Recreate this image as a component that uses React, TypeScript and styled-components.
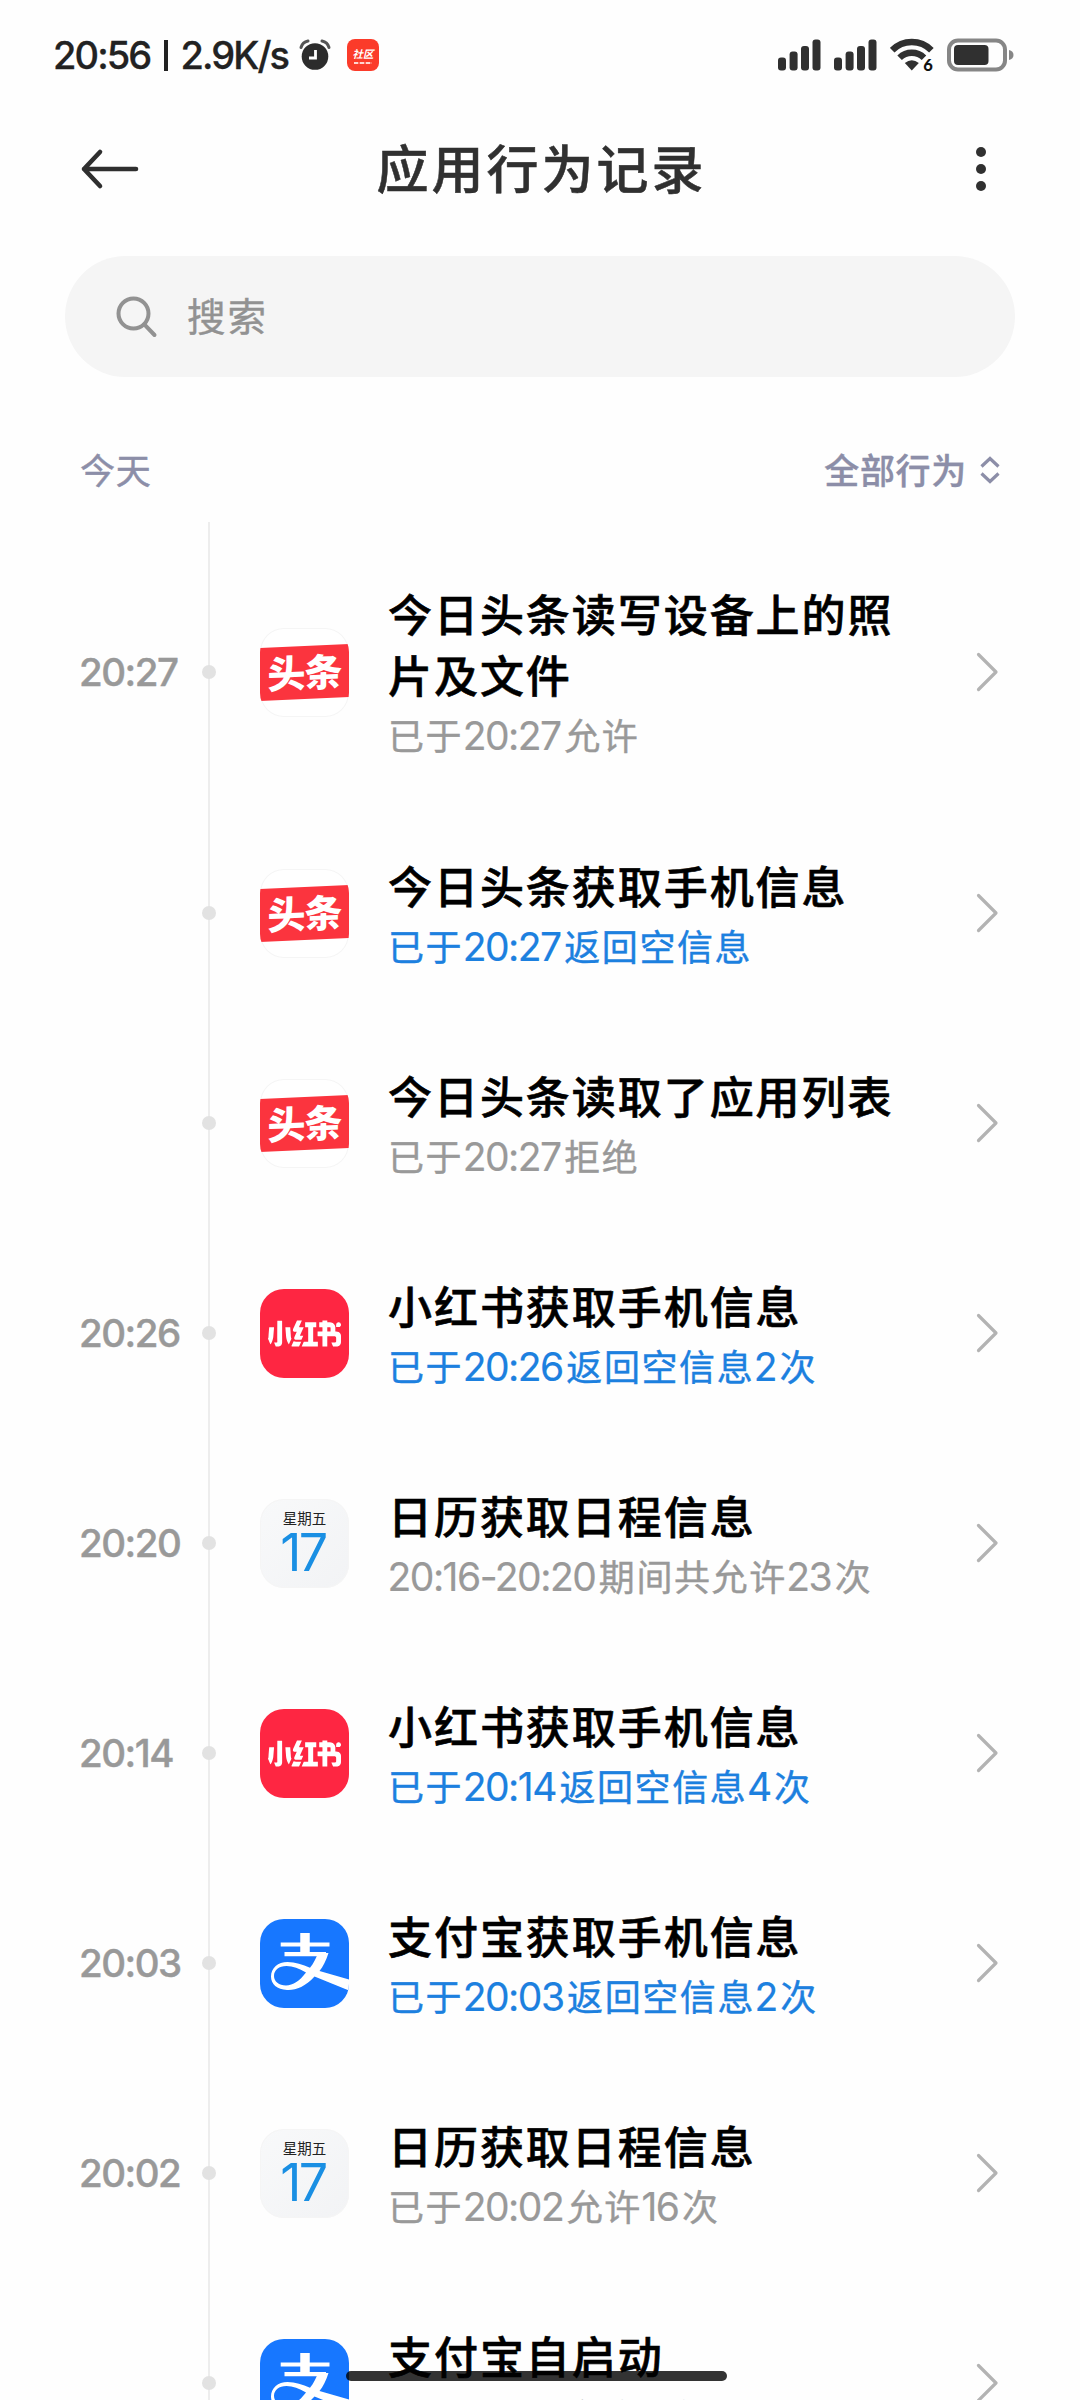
import React from "react";
import styled, { createGlobalStyle } from "styled-components";
import { SiXiaohongshu } from "react-icons/si";

const CJK = `"Noto Sans CJK SC", sans-serif`;
const LATIN = `Inter, "Noto Sans CJK SC", sans-serif`;

const GlobalStyle = createGlobalStyle`
  *, *::before, *::after { box-sizing: border-box; }
  html, body { margin: 0; padding: 0; background: #fefefe; overflow: hidden; }
`;

const Screen = styled.div`
  position: relative;
  display: flex;
  flex-direction: column;
  width: 1080px;
  height: 2400px;
  overflow: hidden;
  background: #fefefe;
  font-family: ${CJK};
  font-feature-settings: "calt", "cv03", "cv04";
  white-space: nowrap;
`;

/* ---------- status bar ---------- */

const StatusBar = styled.header`
  display: flex;
  align-items: center;
  justify-content: space-between;
  flex: none;
  height: 110px;
  padding: 0 66px 0 53px;
`;

const StatusGroup = styled.div<{ $gap: number }>`
  display: flex;
  align-items: center;
  gap: ${(p) => p.$gap}px;
`;

const StatusText = styled.span`
  display: flex;
  align-items: center;
  width: 237px;
  font: 500 38px/50px ${LATIN};
  letter-spacing: -1.9px;
  color: #222;
  -webkit-text-stroke: 0.3px #222;
`;

const Divider = styled.i`
  flex: none;
  width: 4px;
  height: 31px;
  margin: 0 12px 0 14px;
  background: #222;
`;

const CommunityBadge = styled.div`
  display: flex;
  flex-direction: column;
  align-items: center;
  justify-content: center;
  width: 32px;
  height: 32px;
  border-radius: 8px;
  background: #fb3b2a;
  color: #fff;
  font: italic 700 10.5px/16px ${CJK};
`;

const BadgeLine = styled.i`
  width: 18px;
  height: 2px;
  background: repeating-linear-gradient(90deg, #ffd5d0 0 4px, #fc6a5c 4px 6px);
`;

/* ---------- title bar ---------- */

const TitleBar = styled.div`
  display: grid;
  grid-template-columns: 60px 1fr 60px;
  align-items: center;
  flex: none;
  height: 118px;
  padding: 0 80px;
`;

const PageTitle = styled.h1`
  margin: 0 0 5px;
  padding-left: 3px;
  text-align: center;
  font: 500 52px/76px ${CJK};
  letter-spacing: 3px;
  color: #303030;
  -webkit-text-stroke: 0.5px #303030;
`;

const MenuSlot = styled.div`
  display: flex;
  justify-content: flex-end;
`;

/* ---------- search ---------- */

const SearchBox = styled.div`
  display: flex;
  align-items: center;
  gap: 29px;
  flex: none;
  height: 121px;
  margin: 28px 65px 0;
  padding-left: 51px;
  border-radius: 61px;
  background: #f5f5f5;
  font: 400 38.5px/56px ${CJK};
  letter-spacing: 2px;
  color: #929292;
`;

const Placeholder = styled.span`
  padding-bottom: 5px;
  -webkit-text-stroke: 0.4px #929292;
`;

/* ---------- filter ---------- */

const FilterBar = styled.div`
  display: flex;
  align-items: center;
  justify-content: space-between;
  flex: none;
  height: 56px;
  margin-top: 65px;
  padding: 0 80px;
  color: #8c8ea8;
  font: 400 35px/54px ${CJK};
  letter-spacing: 0.7px;
`;

const DayLabel = styled.span`
  padding-bottom: 3px;
  -webkit-text-stroke: 0.5px #8c8ea8;
`;

const FilterButton = styled.div`
  display: flex;
  align-items: center;
  gap: 13px;
  font-weight: 500;
`;

const FilterLabel = styled.span`
  padding-bottom: 3px;
  -webkit-text-stroke: 0.4px #8c8ea8;
`;

/* ---------- timeline ---------- */

const Timeline = styled.main`
  display: flex;
  flex-direction: column;
  flex: none;
  margin-top: 24px;
`;

const Lead = styled.div`
  width: 2px;
  height: 14px;
  margin-left: 208px;
  background: #ededed;
`;

const Row = styled.section<{ $tall?: boolean }>`
  display: grid;
  grid-template-columns: 122px 14px 44px 89px 39px 1fr 24px;
  align-items: center;
  height: ${(p) => (p.$tall ? 272 : 210)}px;
  padding: 0 80px;
`;

const Time = styled.time`
  margin-left: -1px;
  font: 500 38.5px/48px ${LATIN};
  letter-spacing: -1.5px;
  color: #999;
  -webkit-text-stroke: 0.4px #999;
`;

const Rail = styled.div`
  display: flex;
  align-items: center;
  justify-content: center;
  height: 100%;
  background: linear-gradient(#ededed, #ededed) center / 2px 100% no-repeat;
`;

const Dot = styled.i`
  width: 14px;
  height: 14px;
  border-radius: 50%;
  background: #e2e2e2;
`;

const Body = styled.div`
  grid-column: 6;
  padding-top: 3px;
`;

const RowTitle = styled.h2`
  margin: 0;
  font: 500 44px/61px ${CJK};
  letter-spacing: 1.95px;
  color: #000;
  -webkit-text-stroke: 0.6px #000;
`;

const RowNote = styled.p<{ $blue?: boolean }>`
  height: 59px;
  margin: 0;
  font: 400 36px/59px ${CJK};
  letter-spacing: 1.6px;
  color: ${(p) => (p.$blue ? "#1c80df" : "#999")};
  -webkit-text-stroke: 0.4px currentColor;
`;

const Num = styled.span`
  margin: 0 3.5px 0 -0.5px;
  font: 400 39px/50px ${LATIN};
  letter-spacing: -1.5px;
  -webkit-text-stroke: 0.2px currentColor;
`;

/* ---------- app icons ---------- */

const Tile = styled.div<{ $bg: string; $edge?: boolean }>`
  grid-column: 4;
  display: flex;
  flex-direction: column;
  align-items: center;
  justify-content: center;
  width: 89px;
  height: 89px;
  border-radius: 24px;
  overflow: hidden;
  background: ${(p) => p.$bg};
  box-shadow: ${(p) => (p.$edge ? "inset 0 0 0 1px #f5f5f5" : "none")};
`;

const Banner = styled.div`
  display: flex;
  align-items: center;
  justify-content: center;
  width: 89px;
  height: 53px;
  padding-bottom: 3px;
  background: #fb343e;
  transform: skewY(-2.6deg);
  color: #fff;
  font: 900 38px/50px ${CJK};
  letter-spacing: -1px;
`;

const Weekday = styled.span`
  height: 22px;
  margin-top: -4px;
  font: 400 14.5px/22px ${CJK};
  color: #222;
`;

const DayNumber = styled.span`
  height: 46px;
  margin-top: 1px;
  padding-right: 3px;
  font: 400 52px/46px ${LATIN};
  letter-spacing: -2.5px;
  color: #1a8fe3;
`;

const HomeIndicator = styled.div`
  position: absolute;
  left: 346px;
  top: 2371px;
  width: 381px;
  height: 10px;
  border-radius: 5px;
  background: rgba(0, 0, 0, 0.8);
`;

/* ---------- drawings ---------- */

const AlarmIcon = () => (
  <svg width="32" height="32" viewBox="0 0 32 32">
    <circle cx="16" cy="17.5" r="13.3" fill="#2c2c2c" />
    <path d="M2 8.5A9 9 0 0 1 9 2M30 8.5A9 9 0 0 0 23 2" fill="none" stroke="#555" strokeWidth="3" strokeLinecap="round" />
    <path d="M16.5 11v8h-6.5" fill="none" stroke="#fff" strokeWidth="2.8" />
  </svg>
);

const SignalIcon = () => (
  <svg width="43" height="32" viewBox="0 0 43 32">
    <g fill="#303030">
      <rect x="0" y="18.5" width="8" height="13" rx="3" />
      <rect x="11.6" y="12.5" width="8" height="19" rx="3" />
      <rect x="23" y="7" width="8" height="24.5" rx="3" />
      <rect x="34.5" y="0.5" width="8" height="31" rx="3" />
    </g>
  </svg>
);

const WifiIcon = () => (
  <svg width="44" height="34" viewBox="0 0 44 34">
    <g fill="none" stroke="#303030">
      <path d="M2.2 12.2A27.5 27.5 0 0 1 41.4 12.2" strokeWidth="6.4" />
      <path d="M9.6 19.8A17.3 17.3 0 0 1 34 19.8" strokeWidth="6.4" />
    </g>
    <path d="M21.8 32.5L14.8 25Q21.8 19.5 28.8 25Z" fill="#303030" />
    <text x="33.3" y="33" fontFamily="Lato, sans-serif" fontWeight="900" fontSize="16.5" fill="#111" stroke="#fefefe" strokeWidth="2" paintOrder="stroke">6</text>
  </svg>
);

const BatteryIcon = () => (
  <svg width="67" height="34" viewBox="0 0 67 34">
    <rect x="2" y="2.5" width="56" height="29" rx="9" fill="none" stroke="#868686" strokeWidth="4" />
    <rect x="7" y="7" width="34.5" height="20" rx="4" fill="#303030" />
    <path d="M62 12c6 1 6 9 0 10Z" fill="#868686" />
  </svg>
);

const BackIcon = () => (
  <svg width="60" height="42" viewBox="0 0 60 42">
    <path d="M20 4L4 21L20 38M4 21H56" fill="none" stroke="#2f2f2f" strokeWidth="4.6" strokeLinecap="round" strokeLinejoin="round" />
  </svg>
);

const MoreIcon = () => (
  <svg width="38" height="46" viewBox="0 0 38 46">
    <g fill="#303030">
      <circle cx="19" cy="6" r="5" />
      <circle cx="19" cy="23" r="5" />
      <circle cx="19" cy="40" r="5" />
    </g>
  </svg>
);

const SearchIcon = () => (
  <svg width="42" height="42" viewBox="0 0 42 42">
    <circle cx="17.5" cy="17.5" r="15" fill="none" stroke="#929292" strokeWidth="4" />
    <path d="M28.3 28.3L38.5 39" stroke="#929292" strokeWidth="4" strokeLinecap="round" />
  </svg>
);

const SortIcon = () => (
  <svg width="20" height="28" viewBox="0 0 20 28">
    <path d="M1.5 10.5L10 2.5L18.5 10.5M1.5 17.5L10 25.5L18.5 17.5" fill="none" stroke="#8c8ea8" strokeWidth="3.2" />
  </svg>
);

const ChevronIcon = () => (
  <svg width="24" height="42" viewBox="0 0 24 42">
    <path d="M2.5 3.5L20 21L2.5 38.5" fill="none" stroke="#b3b3b3" strokeWidth="3.2" strokeLinecap="round" strokeLinejoin="round" />
  </svg>
);

const AlipayLogo = () => (
  <svg width="89" height="89" viewBox="0 0 89 89">
    <g fill="none" stroke="#fff">
      <path d="M45 14V35" strokeWidth="9.5" />
      <path d="M20.7 25.5H69.5" strokeWidth="4" />
      <path d="M24.5 35.2H66" strokeWidth="4.2" />
    </g>
    <path
      fill="#fff"
      d="M58 34H68.5C66 42 63 47.5 59.5 52L89 60.5V71.5L54.5 57.5C45 68 35.5 71.5 27 71C17 70.5 11 65 11 57.5C11 49 18 43 27.5 43C35.5 43 42.5 45.5 50 48.8C53.5 44.5 56 39.5 58 34ZM46 53.5C39 49.500 33 47 26.500 47C19 47 14 51 14 57C14 62.500 19 66.500 26 66.500C33 66.500 40 61.500 46 53.500Z"
    />
  </svg>
);

type App = "toutiao" | "xhs" | "calendar" | "alipay";

function AppIcon({ app }: { app: App }) {
  switch (app) {
    case "toutiao":
      return (
        <Tile $bg="#fff" $edge>
          <Banner>头条</Banner>
        </Tile>
      );
    case "xhs":
      return (
        <Tile $bg="#fe2642">
          <SiXiaohongshu size={73} color="#fff" />
        </Tile>
      );
    case "calendar":
      return (
        <Tile $bg="linear-gradient(135deg, #f8f9fa, #f2f3f5)" $edge>
          <Weekday>星期五</Weekday>
          <DayNumber>17</DayNumber>
        </Tile>
      );
    default:
      return (
        <Tile $bg="#1777ff">
          <AlipayLogo />
        </Tile>
      );
  }
}

interface Entry {
  time?: string;
  app: App;
  title: string[];
  note: string;
  blue?: boolean;
}

const entries: Entry[] = [
  { time: "20:27", app: "toutiao", title: ["今日头条读写设备上的照", "片及文件"], note: "已于20:27允许" },
  { app: "toutiao", title: ["今日头条获取手机信息"], note: "已于20:27返回空信息", blue: true },
  { app: "toutiao", title: ["今日头条读取了应用列表"], note: "已于20:27拒绝" },
  { time: "20:26", app: "xhs", title: ["小红书获取手机信息"], note: "已于20:26返回空信息2次", blue: true },
  { time: "20:20", app: "calendar", title: ["日历获取日程信息"], note: "20:16-20:20期间共允许23次" },
  { time: "20:14", app: "xhs", title: ["小红书获取手机信息"], note: "已于20:14返回空信息4次", blue: true },
  { time: "20:03", app: "alipay", title: ["支付宝获取手机信息"], note: "已于20:03返回空信息2次", blue: true },
  { time: "20:02", app: "calendar", title: ["日历获取日程信息"], note: "已于20:02允许16次" },
  { app: "alipay", title: ["支付宝自启动"], note: "已于20:02允许2次" },
];

/* Digits use the Latin face at a slightly larger size than the ideographs. */
const withNumbers = (text: string) =>
  text.split(/([\d:-]+)/).map((part, i) => (i % 2 ? <Num key={i}>{part}</Num> : part));

export default function AppBehaviorLog() {
  return (
    <Screen>
      <GlobalStyle />
      <StatusBar>
        <StatusGroup $gap={9}>
          <StatusText>
            20:56
            <Divider />
            2.9K/s
          </StatusText>
          <StatusGroup $gap={16}>
            <AlarmIcon />
            <CommunityBadge>
              社区
              <BadgeLine />
            </CommunityBadge>
          </StatusGroup>
        </StatusGroup>
        <StatusGroup $gap={13}>
          <SignalIcon />
          <SignalIcon />
          <WifiIcon />
          <BatteryIcon />
        </StatusGroup>
      </StatusBar>

      <TitleBar>
        <BackIcon />
        <PageTitle>应用行为记录</PageTitle>
        <MenuSlot>
          <MoreIcon />
        </MenuSlot>
      </TitleBar>

      <SearchBox>
        <SearchIcon />
        <Placeholder>搜索</Placeholder>
      </SearchBox>

      <FilterBar>
        <DayLabel>今天</DayLabel>
        <FilterButton>
          <FilterLabel>全部行为</FilterLabel>
          <SortIcon />
        </FilterButton>
      </FilterBar>

      <Timeline>
        <Lead />
        {entries.map((e, i) => (
          <Row key={i} $tall={e.title.length > 1}>
            <Time>{e.time}</Time>
            <Rail>
              <Dot />
            </Rail>
            <AppIcon app={e.app} />
            <Body>
              <RowTitle>
                {e.title.map((line) => (
                  <div key={line}>{line}</div>
                ))}
              </RowTitle>
              <RowNote $blue={e.blue}>{withNumbers(e.note)}</RowNote>
            </Body>
            <ChevronIcon />
          </Row>
        ))}
      </Timeline>
      <HomeIndicator />
    </Screen>
  );
}
